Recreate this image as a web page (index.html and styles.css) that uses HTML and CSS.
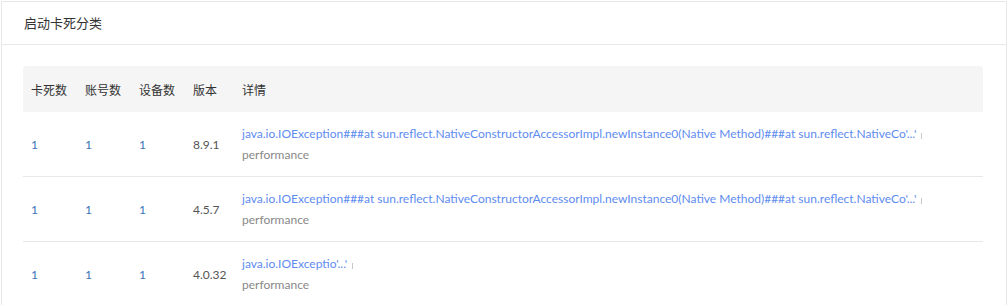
FILE: index.html
```html
<!DOCTYPE html>
<html lang="zh">
<head>
<meta charset="utf-8">
<title>启动卡死分类</title>
<link rel="stylesheet" href="styles.css">
</head>
<body>
<div class="card">
  <div class="card-head">启动卡死分类</div>
  <div class="card-body">
    <table class="tbl">
      <colgroup>
        <col class="c-num"><col class="c-num"><col class="c-num"><col class="c-ver"><col>
      </colgroup>
      <thead>
        <tr><th>卡死数</th><th>账号数</th><th>设备数</th><th>版本</th><th>详情</th></tr>
      </thead>
      <tbody>
        <tr>
          <td class="num">1</td><td class="num">1</td><td class="num">1</td><td class="ver">8.9.1</td>
          <td><div class="link">java.io.IOException###at sun.reflect.NativeConstructorAccessorImpl.newInstance0(Native Method)###at sun.reflect.NativeCo'...'<span class="mark"></span></div><div class="tag">performance</div></td>
        </tr>
        <tr>
          <td class="num">1</td><td class="num">1</td><td class="num">1</td><td class="ver">4.5.7</td>
          <td><div class="link">java.io.IOException###at sun.reflect.NativeConstructorAccessorImpl.newInstance0(Native Method)###at sun.reflect.NativeCo'...'<span class="mark"></span></div><div class="tag">performance</div></td>
        </tr>
        <tr>
          <td class="num">1</td><td class="num">1</td><td class="num">1</td><td class="ver">4.0.32</td>
          <td><div class="link">java.io.IOExceptio'...'<span class="mark"></span></div><div class="tag">performance</div></td>
        </tr>
      </tbody>
    </table>
  </div>
</div>
</body>
</html>
```

FILE: styles.css
```css
html, body {
  margin: 0;
  padding: 0;
  background: #fff;
}
body {
  padding: 1px;
  font-family: "Lato", "Noto Sans CJK SC", sans-serif;
  font-size: 12px;
  color: #333;
}
.card {
  border: 1px solid #e8e8e8;
  width: 1004px;
}
.card-head {
  height: 42px;
  line-height: 42px;
  padding-left: 22px;
  font-size: 13px;
  color: #333;
  border-bottom: 1px solid #e8e8e8;
}
.card-body {
  padding: 21px 21px 0;
}
.tbl {
  width: 960px;
  border-collapse: separate;
  border-spacing: 0;
  table-layout: fixed;
}
.c-num { width: 54px; }
.c-ver { width: 49px; }
.tbl th {
  background: #f5f5f5;
  height: 46px;
  padding: 0 8px;
  text-align: left;
  font-weight: normal;
  color: #333;
}
.tbl th:first-child { border-top-left-radius: 4px; }
.tbl th:last-child { border-top-right-radius: 4px; }
.tbl td {
  padding: 11px 8px 11px;
  border-bottom: 1px solid #e8e8e8;
  vertical-align: middle;
  line-height: 21px;
}
.tbl td.num { color: #3a74b8; }
.tbl td.ver { color: #555; }
.link {
  color: #5e8cf0;
  white-space: nowrap;
}
.mark {
  display: inline-block;
  width: 1px;
  height: 6px;
  background: #c8c8c8;
  margin-left: 5px;
  vertical-align: -1px;
}
.tag {
  color: #888;
}
```
